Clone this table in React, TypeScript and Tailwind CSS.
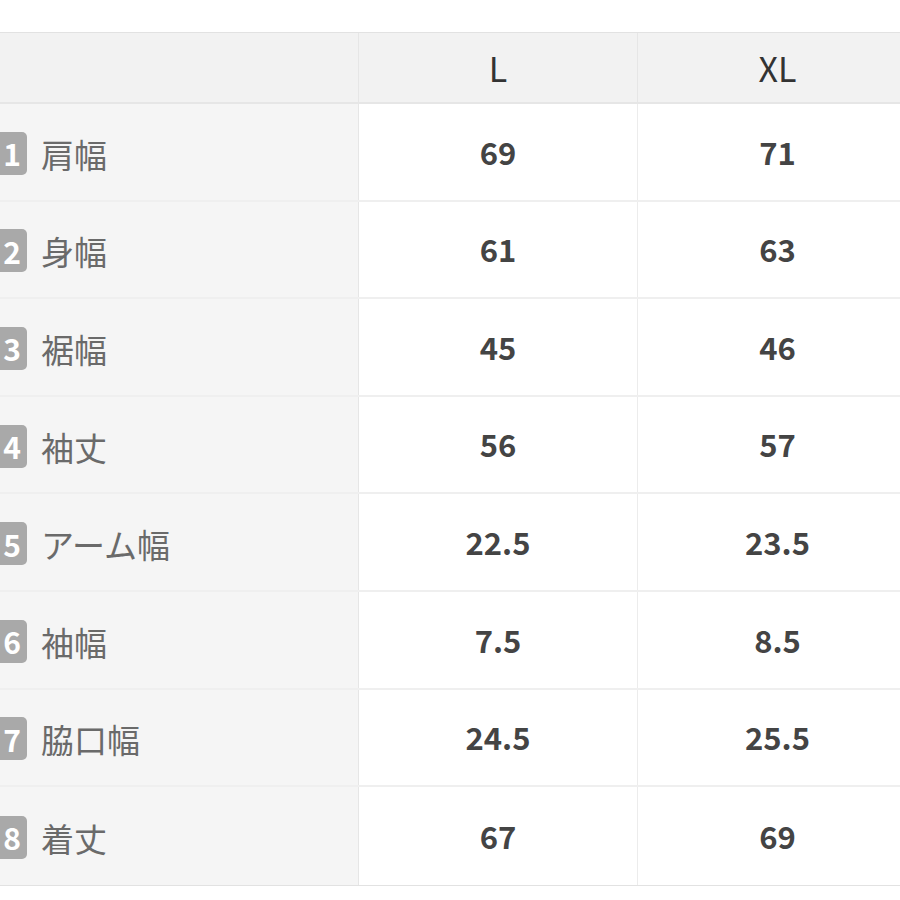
import React from "react";

const rows = [
  { n: "1", label: "肩幅", l: "69", xl: "71" },
  { n: "2", label: "身幅", l: "61", xl: "63" },
  { n: "3", label: "裾幅", l: "45", xl: "46" },
  { n: "4", label: "袖丈", l: "56", xl: "57" },
  { n: "5", label: "アーム幅", l: "22.5", xl: "23.5" },
  { n: "6", label: "袖幅", l: "7.5", xl: "8.5" },
  { n: "7", label: "脇口幅", l: "24.5", xl: "25.5" },
  { n: "8", label: "着丈", l: "67", xl: "69" },
];

export default function App() {
  return (
    <div
      className="w-[900px] h-[900px] bg-white overflow-hidden pt-[32px]"
      style={{ fontFamily: '"Noto Sans CJK JP", "Noto Sans", sans-serif' }}
    >
      <div className="w-[1000px] border-t border-b border-[#e2e2e2]">
        <div className="flex h-[71px] bg-[#f2f2f2] border-b-2 border-[#e6e6e6]">
          <div className="w-[359px] shrink-0 border-r border-[#e6e6e6]" />
          <div className="w-[279px] shrink-0 border-r border-[#e6e6e6] flex items-center justify-center text-[34px] text-[#333]">
            L
          </div>
          <div className="w-[279px] shrink-0 flex items-center justify-center text-[34px] text-[#333]">
            XL
          </div>
        </div>
        {rows.map((r, i) => (
          <div
            key={r.n}
            className={
              "flex h-[97.6px] " +
              (i < rows.length - 1 ? "border-b-2 border-[#efefef]" : "")
            }
          >
            <div className="w-[359px] shrink-0 bg-[#f5f5f5] border-r border-[#e6e6e6] flex items-center">
              <div className="-ml-[15px] w-[42px] h-[43px] mt-[3px] rounded-[5px] bg-[#a9a9a9] flex items-center justify-center pl-[12px] text-white font-bold text-[30px] leading-none shrink-0">
                {r.n}
              </div>
              <div className="ml-[14px] text-[33px] text-[#6a6a6a] leading-none mt-[5px]">
                {r.label}
              </div>
            </div>
            <div className="w-[279px] shrink-0 border-r border-[#ececec] flex items-center justify-center text-[31px] font-bold text-[#444]">
              {r.l}
            </div>
            <div className="w-[279px] shrink-0 flex items-center justify-center text-[31px] font-bold text-[#444]">
              {r.xl}
            </div>
          </div>
        ))}
      </div>
    </div>
  );
}
